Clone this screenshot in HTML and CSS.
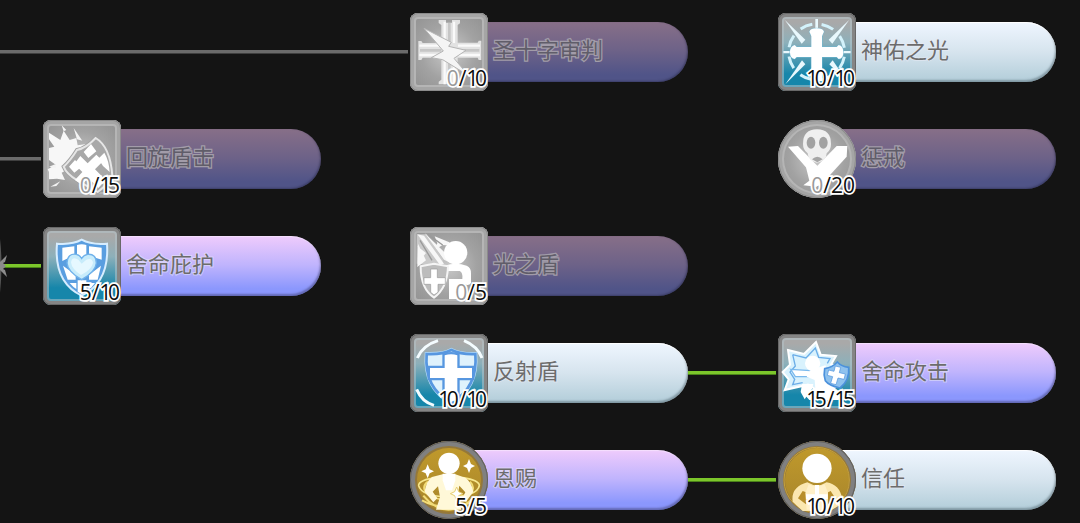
FILE: index.html
```html
<!DOCTYPE html>
<html lang="zh-CN">
  <head>
    <meta charset="UTF-8" />
    <meta name="viewport" content="width=device-width, initial-scale=1.0" />
    <title>技能树</title>
    <link rel="stylesheet" href="styles.css">
  </head>
  <body>
    <main class="tree">
      <!-- row 1 -->
      <div class="link row1 from-edge-long"></div>
      <div class="skill row1 col2 locked">
        <div class="icon">
          <svg viewBox="0 0 234 234">
            <path d="M86 21h22v8h18v-8h24v10l-7 5v53h60l3-6h8v58h-8l-3-7h-60v66l7 6v8H86v-8l8-6v-66H38l-4 7h-9V84h9l4 6h56V36l-8-6z" fill="#e2e2e2" />
            <path d="M104 26v64M132 26v64M28 98h66M144 98h66M28 126h66M144 126h66M104 134v80M132 134v80" stroke="#fafafa" stroke-width="7" />
            <path d="M118 90V30M30 112h64M144 112h64M118 136v76" stroke="#c6c6c6" stroke-width="8" />
            <path d="M42 46l82 42-8 12 52 12-36 24 44 52-78-48-34-6 36-20z" fill="#f5f5f5" stroke="#b4b4b4" stroke-width="3" />
          </svg>
          <span class="level"><i class="zero">0</i>/<i class="one">1</i>0</span>
        </div>
        <div class="name">圣十字审判</div>
      </div>
      <div class="skill row1 col3 maxed">
        <div class="icon">
          <svg viewBox="0 0 234 234">
            <circle cx="116" cy="117" r="84" fill="none" stroke="#d3f2fb" stroke-width="9" stroke-dasharray="38 28" stroke-dashoffset="-14" />
            <g fill="#e8f8fd">
              <path d="M20 20l62 60-11 12z" /><path d="M214 20l-62 60 11 12z" />
              <path d="M22 214l60-60-10-12z" /><path d="M214 214l-60-60 10-12z" />
              <path d="M112 18h8v32h-8zM16 114h26v7H16zM192 114h26v7h-26z" />
            </g>
            <path d="M97 62l-3-6q4-10 22-10t22 10l-3 6-3 8v32h44l6-6q14 2 14 22t-14 20l-6-6h-44v72h-32v-72H56l-6 6q-14-2-14-20t14-22l6 6h44V70z" fill="#fff" stroke="#6fb9d4" stroke-width="3" paint-order="stroke" />
          </svg>
          <span class="level"><i class="one">1</i>0/<i class="one">1</i>0</span>
        </div>
        <div class="name">神佑之光</div>
      </div>

      <!-- row 2 -->
      <div class="link row2 from-edge"></div>
      <div class="skill row2 col1 locked">
        <div class="icon">
          <svg viewBox="0 0 234 234">
            <path d="M18 38l34 22 10-28 18 28 20-6 4 22 26-4-14 30-30 40-30 16 10 22-24-4-24 2v-22l-4-8 24-14-20-14V84l16-4-16-22z" fill="#f7f7f7" />
            <path d="M56 16l14 14-8 4zM92 24l26 38-16-4zM22 200l30-16-12 14zM18 140l20-8v12z" fill="#f3f3f3" />
            <path d="M158 54q44 26 50 114-10 22-44 48-36-20-60-34-34-20-42-42 20-18 40-50 28-6 56-36z" fill="#a8a8a8" stroke="#a2a2a2" stroke-width="12" />
            <path d="M158 54q44 26 50 114-10 22-44 48-36-20-60-34-34-20-42-42 20-18 40-50 28-6 56-36z" fill="#a8a8a8" stroke="#e6e6e6" stroke-width="6" />
            <path d="M112 108l22 22 26-26 20 20-24 24 32 32-22 24-30-30-20 20-20-14 22-24-24-24z" fill="#fff" />
            <path d="M96 120l-18 20 16 18 22-18zM144 72l-22 24 14 18 24-20zM184 98l-18 18 14 22 20 18q-2-34-16-58z" fill="#fff" />
          </svg>
          <span class="level"><i class="zero">0</i>/<i class="one">1</i>5</span>
        </div>
        <div class="name">回旋盾击</div>
      </div>
      <div class="skill row2 col3 locked round">
        <div class="icon">
          <svg viewBox="0 0 234 234">
            <g fill="#fff">
              <path d="M30 80l30-2 94 96-18 28-32-22-6-22z" />
              <path d="M208 78l-32 0-82 84 6 40 28-6 78-86z" />
              <path d="M84 142l24 0 30 34-22 24-40-4 18-14z" />
            </g>
            <path d="M75 72q0-44 42-44t42 44q0 18-13 28-1 24-29 28-26-4-28-28-14-10-14-28z" fill="#efefef" />
            <ellipse cx="99" cy="68" rx="13" ry="18" fill="#a2a2a2" />
            <ellipse cx="136" cy="68" rx="13" ry="18" fill="#a2a2a2" />
            <path d="M102 118q16-16 32 0l-16 9z" fill="#a6a6a6" />
          </svg>
          <span class="level"><i class="zero">0</i>/20</span>
        </div>
        <div class="name">惩戒</div>
      </div>

      <!-- row 3 -->
      <div class="link row3 from-edge active"></div>
      <svg class="spark row3" viewBox="0 0 8 78">
        <path d="M0 12q3 26 0 54z" fill="#555" />
        <path d="M0 35l2-2 5-5-2 7-2 1 3 3-3 3 2 1 2 7-5-5-2-2z" fill="#8b8b8b" />
      </svg>
      <div class="skill row3 col1">
        <div class="icon">
          <svg viewBox="0 0 234 234">
            <path d="M116 38q28 16 76 12 8 116-76 156Q32 166 42 50q46 4 74-12z" fill="#5a9ee0" stroke="#d6edff" stroke-width="6" />
            <path d="M102 54q14-4 28 0v34q-14 4-28 0zM58 62l36-4v26l-36 18zM138 58l38 4v36l-38-12zM60 116l38 28v14H74zM174 116l-36 28v14h26zM80 168h20v18q-10-6-20-18zM136 168h20q-8 12-20 20zM104 160h26v34l-13 8-13-8z" fill="#fff" />
            <path d="M116 158q-42-24-44-50 2-30 28-26 10 2 16 12 6-10 18-12 26-2 26 26-2 26-44 50z" fill="#c8ecfb" stroke="#70b2eb" stroke-width="4" />
            <path d="M114 144q-28-18-30-38 4-20 22-8l10 12 14-12q18-6 20 10-4 20-36 36z" fill="#e6f8ff" />
          </svg>
          <span class="level">5/<i class="one">1</i>0</span>
        </div>
        <div class="name">舍命庇护</div>
      </div>
      <div class="skill row3 col2 locked">
        <div class="icon">
          <svg viewBox="0 0 234 234">
            <path d="M20 22l30 0 50 76-10 22-70-10z" fill="#c9c9c9" />
            <path d="M22 22l20 4 60 84-12 4zM44 18l72 70 6 20-20-10zM24 50l24 50-26 20zM74 28l44 18 6 10-26-2-20 12 4-18zM22 58l26 20-8 10z" fill="#f7f7f7" />
            <path d="M60 26l38 28M30 40l36 60" stroke="#999" stroke-width="4" />
            <circle cx="137" cy="77" r="35" fill="#fff" />
            <path d="M104 116q34-12 66 0 14 6 13 24v28q-6 10-20 4v44h-46v-60h40q2-20-8-24h-45z" fill="#fff" />
            <path d="M32 118l40-8 42 8q-2 66-42 94-40-26-40-94z" fill="#bcbcbc" stroke="#f4f4f4" stroke-width="6" />
            <path d="M62 126h20v26h24v20H84v24l-12 8-10-8v-24H42v-20h20z" fill="#fff" stroke="#999" stroke-width="2" />
          </svg>
          <span class="level"><i class="zero">0</i>/5</span>
        </div>
        <div class="name">光之盾</div>
      </div>

      <!-- row 4 -->
      <div class="skill row4 col2 maxed">
        <div class="icon">
          <svg viewBox="0 0 234 234">
            <g fill="none" stroke="#f4fcff" stroke-width="9">
              <path d="M84 20Q38 34 22 72M162 20q40 16 54 52M20 166q16 38 52 48" />
            </g>
            <path d="M124 48q30 14 72 12 8 102-72 146Q42 164 50 60q48 2 74-12z" fill="#d4eefb" stroke="#b8def9" stroke-width="12" />
            <path d="M124 48q30 14 72 12 8 102-72 146Q42 164 50 60q48 2 74-12z" fill="#dff2fc" stroke="#5797e0" stroke-width="8" />
            <path d="M104 64q20-6 38 0v38h44v30h-44v64l-19 8-19-8v-64H60v-30h44z" fill="#fff" stroke="#5797e0" stroke-width="14" paint-order="stroke" />
          </svg>
          <span class="level"><i class="one">1</i>0/<i class="one">1</i>0</span>
        </div>
        <div class="name">反射盾</div>
      </div>
      <div class="link row4 between active"></div>
      <div class="skill row4 col3">
        <div class="icon">
          <svg viewBox="0 0 234 234">
            <path d="M30 48l48 12 36-36 14 38 46 4-14 24 40 22-30 50-26 24-54-34-70 16 12-32-18-22 22-22z" fill="#d9f2fd" stroke="#fff" stroke-width="6" />
            <path d="M44 62l40 10 28-30 10 28 34 4-8 14M44 62l8 34-16 18 14 22-6 16 30-6" fill="none" stroke="#6caee8" stroke-width="4" />
            <path d="M38 106l60 4q14 0 12 18l-58 0z" fill="#fff" stroke="#7ab9ed" stroke-width="4" />
            <circle cx="104" cy="88" r="23" fill="#fff" />
            <path d="M98 108l44-14 12 28 16 44 26 8-14 24-88 0-18-20 36-14-2-26-24-10z" fill="#fff" />
            <path d="M72 150h34l-4 14-22 32-12-22z" fill="#fff" />
            <path d="M178 84q12 14 34 16 4 38-26 62-34-8-44-22-6-18-2-36 24-4 38-20z" fill="#8fc2ee" stroke="#4b91dc" stroke-width="5" />
            <path d="M172 96l16 4-4 16 18 4-4 16-18-4-6 20-16-4 6-20-16-4 4-16 16 4z" fill="#fff" stroke="#4b91dc" stroke-width="2" />
          </svg>
          <span class="level"><i class="one">1</i>5/<i class="one">1</i>5</span>
        </div>
        <div class="name">舍命攻击</div>
      </div>

      <!-- row 5 -->
      <div class="skill row5 col2 round gold">
        <div class="icon">
          <svg viewBox="0 0 234 234">
            <path d="M84 110Q24 116 26 134q8 32 90 34 86-2 92-34 0-16-50-24" fill="none" stroke="#f7e78e" stroke-width="5" />
            <path d="M54 122q-24 18 2 40 54 30 120 0 24-20 4-40M40 164q34 42 76 42t78-40M36 178q36 20 80 20t82-22" fill="none" stroke="#f2dc78" stroke-width="6" />
            <circle cx="117" cy="67" r="32" fill="#fff" />
            <path d="M98 100h38l30 10q18 12 24 42l-22 30-12-8 10-20-18-20-6 34 12 38H78l12-38-6-32-16 16 14 20-12 12-26-32q4-30 22-44z" fill="#fff8d8" />
            <path d="M98 98h38v20l-10 30H108l-10-30z" fill="#fff" />
            <path d="M53 70l6 15 13 6-13 6-6 15-6-15-13-6 13-6zM177 54l6 15 12 6-12 6-6 15-6-15-12-6 12-6z" fill="#fff" />
            <path d="M140 138l6 14 13 6-13 6-6 14-6-14-13-6 13-6z" fill="#fff" stroke="#e8cf70" stroke-width="3" />
          </svg>
          <span class="level">5/5</span>
        </div>
        <div class="name">恩赐</div>
      </div>
      <div class="link row5 between active"></div>
      <div class="skill row5 col3 maxed round gold">
        <div class="icon">
          <svg viewBox="0 0 234 234">
            <circle cx="116" cy="117" r="98" fill="none" stroke="#c5a03c" stroke-width="3" />
            <path d="M88 124q30 18 58 0 40 8 46 48l-6 20-30 18-82 0-30-28q-6-44 44-58z" fill="#fbe7b0" />
            <path d="M74 150l-14 22 24 18v-36zM158 150l14 22-22 18v-36z" fill="#b88e2b" />
            <path d="M92 130q24 12 48 0l10 26-6 50H86l-4-50z" fill="#fff0c8" />
            <path d="M111 132h12v28h26v14H84v-14h27z" fill="#fff" />
            <circle cx="117" cy="82" r="44" fill="#fff" />
          </svg>
          <span class="level"><i class="one">1</i>0/<i class="one">1</i>0</span>
        </div>
        <div class="name">信任</div>
      </div>
    </main>
  </body>
</html>
```

FILE: styles.css
```css
* {
  box-sizing: border-box;
}
body {
  margin: 0;
  height: 523px;
  overflow: hidden;
  background: #141414;
  font-family: "Noto Sans CJK SC", sans-serif;
}
.tree {
  display: grid;
  grid-template-columns: 43px 278px 89px 278px 90px 278px;
  grid-template-rows: repeat(5, 78px);
  row-gap: 29px;
  padding-top: 13px;
}
.row1 { grid-row: 1; }
.row2 { grid-row: 2; }
.row3 { grid-row: 3; }
.row4 { grid-row: 4; }
.row5 { grid-row: 5; }
.col1 { grid-column: 2; }
.col2 { grid-column: 4; }
.col3 { grid-column: 6; }

/* connectors */
.link {
  align-self: center;
  height: 4px;
  margin-right: 2px;
  background: #6b6b6b;
  border-bottom: 1px solid #3f3f3f;
}
.link.active {
  background: #7cc62b;
  border-bottom-color: #4b821a;
}
.from-edge { grid-column: 1; }
.from-edge-long { grid-column: 1 / 4; }
.between { grid-column: 5; }
.spark {
  grid-column: 1;
  width: 8px;
  height: 78px;
}

/* skill */
.skill {
  display: flex;
  align-items: center;
  position: relative;
  isolation: isolate;
}
.skill::before {
  content: "";
  position: absolute;
  z-index: -1;
  inset: 9px 0 9px 40px;
  border-radius: 0 30px 30px 0;
  background: linear-gradient(#efcbfc, #c0b4fd 48%, #8b97fd 88%);
  box-shadow: inset -1px -2px 2px rgba(60, 60, 110, 0.5), inset 0 1px 1px rgba(255, 255, 255, 0.4);
}
.maxed::before {
  background: linear-gradient(#eff6ff, #d6e4ee 50%, #b2cdd9);
  box-shadow: inset -1px -2px 2px rgba(80, 100, 110, 0.5), inset 0 1px 1px #fff;
}
.locked::before {
  background: linear-gradient(#876f88, #6d6288 48%, #505488 88%);
  box-shadow: inset -1px -1px 2px rgba(40, 40, 70, 0.5);
}
.icon {
  position: relative;
  flex: none;
  width: 78px;
  height: 78px;
  border-radius: 8px;
  background: linear-gradient(#a9a9a9 12%, #8db0ba 38%, #1686aa 78%);
  box-shadow: inset 0 0 0 1px #686868, inset 0 0 0 4px #858585, inset 0 0 0 6px rgba(180, 195, 200, 0.55);
}
.icon svg {
  display: block;
  width: 78px;
  height: 78px;
}
.locked .icon {
  background: radial-gradient(#c9c9c9, #a2a2a2 50%, #8e8e8e);
  box-shadow: inset 0 0 0 1px #8b8b8b, inset 0 0 0 4px #a5a5a5, inset 0 0 0 6px #b5b5b5;
}
.round .icon {
  border-radius: 50%;
}
.gold .icon {
  background: linear-gradient(#c29b2c, #a5832b);
  box-shadow: inset 0 0 0 1px #606060, inset 0 0 0 5px #808080, inset 0 0 0 7px #94783a;
}
.name {
  margin: -9px 0 0 5px;
  font-size: 22px;
  line-height: 30px;
  color: #6c6c6c;
  -webkit-text-stroke: 2px rgba(235, 235, 245, 0.5);
  paint-order: stroke fill;
}
.locked .name {
  color: #605d69;
  -webkit-text-stroke: 2.5px #a29ca9;
}

/* points spent / max */
.level {
  position: absolute;
  right: 1px;
  bottom: 1px;
  font-family: "Open Sans", sans-serif;
  font-size: 21px;
  font-weight: 500;
  line-height: 24px;
  color: #0c0c0c;
  white-space: nowrap;
  -webkit-text-stroke: 3.5px #fff;
  paint-order: stroke fill;
}
.level i {
  font-style: normal;
}
.level .one {
  letter-spacing: -3.5px;
}
.level .zero {
  color: #999;
}
```
